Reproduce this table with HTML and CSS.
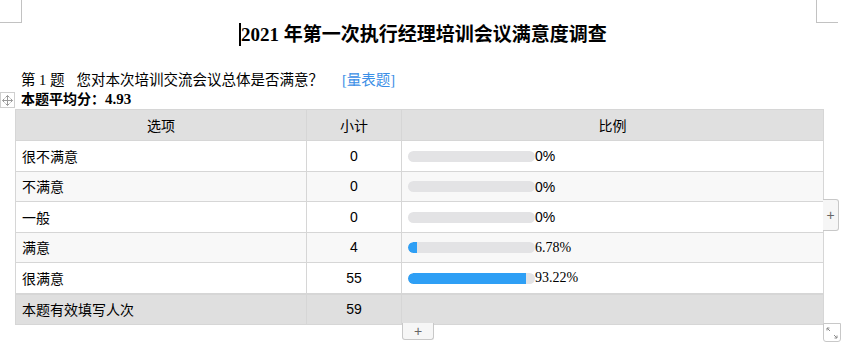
FILE: index.html
```html
<!DOCTYPE html>
<html lang="zh-CN">
<head>
    <meta charset="UTF-8">
    <meta name="viewport" content="width=device-width, initial-scale=1.0">
    <title>满意度调查</title>
    <link rel="stylesheet" href="styles.css">
</head>
<body>
    <div class="page">
        <!-- page corner marks -->
        <span class="mark mark-left"></span>
        <span class="mark mark-right"></span>

        <div class="doc">
            <h1 class="title"><span class="caret"></span>2021 年第一次执行经理培训会议满意度调查</h1>

            <p class="question">第 1 题<span class="q-text">您对本次培训交流会议总体是否满意？</span><span class="q-type">[量表题]</span></p>
            <p class="score">本题平均分：<span class="num">4.93</span></p>

            <div class="table-wrap">
                <!-- move handle -->
                <span class="move-handle">
                    <svg width="11" height="11" viewBox="0 0 11 11">
                        <path d="M5.5 0.5v10M0.5 5.5h10" stroke="#9a9a9a" stroke-width="1" fill="none"/>
                        <path d="M3.5 2.5l2-2 2 2M3.5 8.5l2 2 2-2M2.5 3.5l-2 2 2 2M8.5 3.5l2 2-2 2" stroke="#9a9a9a" stroke-width="1" fill="none"/>
                    </svg>
                </span>

                <table class="stats">
                    <colgroup>
                        <col class="col-option">
                        <col class="col-count">
                        <col class="col-ratio">
                    </colgroup>
                    <thead>
                        <tr>
                            <th>选项</th>
                            <th>小计</th>
                            <th>比例</th>
                        </tr>
                    </thead>
                    <tbody>
                        <tr>
                            <td>很不满意</td>
                            <td class="count">0</td>
                            <td><span class="bar"><span class="fill" style="width: 0%"></span></span><span class="pct">0%</span></td>
                        </tr>
                        <tr class="alt">
                            <td>不满意</td>
                            <td class="count">0</td>
                            <td><span class="bar"><span class="fill" style="width: 0%"></span></span><span class="pct">0%</span></td>
                        </tr>
                        <tr>
                            <td>一般</td>
                            <td class="count">0</td>
                            <td><span class="bar"><span class="fill" style="width: 0%"></span></span><span class="pct">0%</span></td>
                        </tr>
                        <tr class="alt">
                            <td>满意</td>
                            <td class="count">4</td>
                            <td><span class="bar"><span class="fill" style="width: 6.78%"></span></span><span class="pct serif">6.78%</span></td>
                        </tr>
                        <tr>
                            <td>很满意</td>
                            <td class="count">55</td>
                            <td><span class="bar"><span class="fill" style="width: 93.22%"></span></span><span class="pct serif">93.22%</span></td>
                        </tr>
                        <tr class="total">
                            <td>本题有效填写人次</td>
                            <td class="count">59</td>
                            <td></td>
                        </tr>
                    </tbody>
                </table>

                <!-- editor controls -->
                <button class="add-col">+</button>
                <button class="add-row">+</button>
                <span class="resize">
                    <svg width="12" height="12" viewBox="0 0 12 12">
                        <path d="M1 1l3 3M1 1h2.5M1 1v2.5" stroke="#8c8c8c" stroke-width="1" fill="none"/>
                        <path d="M11 11l-3-3M11 11h-2.5M11 11v-2.5" stroke="#8c8c8c" stroke-width="1" fill="none"/>
                    </svg>
                </span>
            </div>
        </div>
    </div>
</body>
</html>
```

FILE: styles.css
```css
body {
    margin: 0;
    background: #fff;
    font-family: "Liberation Sans", "Noto Sans CJK SC", sans-serif;
    color: #000;
}
.page {
    position: relative;
    width: 854px;
    height: 355px;
    overflow: hidden;
}
.mark {
    position: absolute;
    top: 0;
    width: 21px;
    height: 22px;
    border-bottom: 1px solid #c2c2c2;
}
.mark-left {
    left: 0;
    border-right: 1px solid #c2c2c2;
}
.mark-right {
    left: 816px;
    border-left: 1px solid #c2c2c2;
}
.doc {
    width: 808px;
    margin-left: 15px;
}
.title {
    margin: 20px 0 0;
    padding-left: 8px;
    height: 30px;
    line-height: 30px;
    text-align: center;
    font-family: "Liberation Serif", "Noto Sans CJK SC", serif;
    font-size: 19px;
    font-weight: bold;
}
.caret {
    display: inline-block;
    width: 2px;
    height: 23px;
    background: #000;
    vertical-align: middle;
    position: relative;
    top: -2px;
}
.question {
    margin: 20px 0 0;
    padding-left: 6px;
    height: 20px;
    line-height: 20px;
    font-family: "Liberation Serif", "Noto Sans CJK SC", serif;
    font-size: 14.5px;
}
.q-text {
    margin-left: 12px;
}
.q-type {
    margin-left: 19px;
    color: #3a8ee6;
}
.score {
    margin: 0;
    padding-left: 6px;
    height: 18px;
    line-height: 18px;
    font-family: "Liberation Serif", "Noto Sans CJK SC", serif;
    font-size: 14px;
    font-weight: bold;
}
.score .num {
    font-size: 15px;
}
.table-wrap {
    position: relative;
    margin-top: 1px;
}
.move-handle {
    position: absolute;
    left: -15px;
    top: -17px;
    width: 13px;
    height: 14px;
    border: 1px solid #cfcfcf;
    display: flex;
    align-items: center;
    justify-content: center;
    background: #fff;
}
.stats {
    width: 808px;
    border-collapse: collapse;
    table-layout: fixed;
    font-size: 14px;
}
.col-option { width: 291px; }
.col-count { width: 95px; }
.col-ratio { width: 422px; }
.stats th,
.stats td {
    height: 29.5px;
    padding: 0 6px;
    border: 1px solid #d6d6d6;
    text-align: left;
    white-space: nowrap;
}
.stats th {
    height: 30px;
    background: #e0e0e0;
    font-weight: normal;
    text-align: center;
}
.stats .count {
    text-align: center;
}
.stats .alt td {
    background: #f8f8f8;
}
.stats .total td {
    height: 29px;
    background: #dfdfdf;
    border-top: 2px solid #d6d6d6;
}
.bar {
    display: inline-block;
    width: 127px;
    height: 11px;
    border-radius: 6px;
    background: #e3e3e5;
    overflow: hidden;
    vertical-align: middle;
}
.fill {
    display: block;
    height: 100%;
    background: #2e9ff5;
    border-radius: 6px 0 0 6px;
}
.pct {
    vertical-align: middle;
}
.pct.serif {
    font-family: "Liberation Serif", serif;
}
.add-col {
    position: absolute;
    left: 808px;
    top: 90px;
    width: 16px;
    height: 32px;
    padding: 0;
    border: 1px solid #c8c8c8;
    border-left: none;
    border-radius: 0 3px 3px 0;
    background: #f6f6f6;
    color: #666;
    font-size: 14px;
    line-height: 28px;
    font-family: "Liberation Sans", sans-serif;
}
.add-row {
    position: absolute;
    left: 387px;
    top: 214px;
    width: 32px;
    height: 17px;
    padding: 0;
    border: 1px solid #c8c8c8;
    border-top: none;
    border-radius: 0 0 3px 3px;
    background: #f6f6f6;
    color: #666;
    font-size: 14px;
    line-height: 14px;
    font-family: "Liberation Sans", sans-serif;
}
.resize {
    position: absolute;
    left: 808px;
    top: 214px;
    width: 16px;
    height: 17px;
    border: 1px solid #c8c8c8;
    border-radius: 0 0 3px 3px;
    display: flex;
    align-items: center;
    justify-content: center;
    background: #fff;
}
```
